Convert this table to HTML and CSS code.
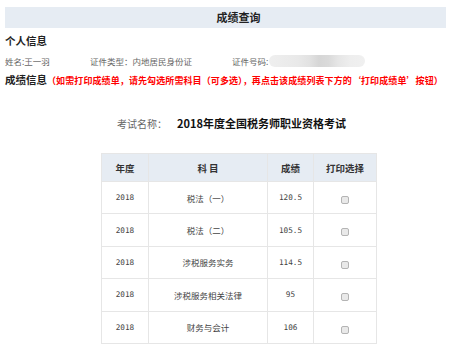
FILE: index.html
```html
<!DOCTYPE html>
<html lang="zh">
<head>
<meta charset="utf-8">
<title>成绩查询</title>
<link rel="stylesheet" href="styles.css">
</head>
<body>
<div class="page">
  <div class="titlebar"><span>成绩查询</span></div>
  <div class="heading">个人信息</div>
  <div class="info">
    <span>姓名:王一羽</span>
    <span>证件类型：内地居民身份证</span>
    <span class="idno">证件号码:<i class="mask"></i></span>
  </div>
  <div class="heading score-head">成绩信息<span class="notice">（如需打印成绩单，请先勾选所需科目（可多选），再点击该成绩列表下方的‘打印成绩单’按钮）</span></div>
  <div class="exam"><span class="exam-label">考试名称：</span><span class="exam-name">2018年度全国税务师职业资格考试</span></div>
  <table class="scores">
    <colgroup><col class="c1"><col class="c2"><col class="c3"><col class="c4"></colgroup>
    <thead>
      <tr><th>年度</th><th>科 目</th><th>成绩</th><th>打印选择</th></tr>
    </thead>
    <tbody>
      <tr><td class="num">2018</td><td>税法（一）</td><td class="num">120.5</td><td><input type="checkbox" class="chk"></td></tr>
      <tr><td class="num">2018</td><td>税法（二）</td><td class="num">105.5</td><td><input type="checkbox" class="chk"></td></tr>
      <tr><td class="num">2018</td><td>涉税服务实务</td><td class="num">114.5</td><td><input type="checkbox" class="chk"></td></tr>
      <tr><td class="num">2018</td><td>涉税服务相关法律</td><td class="num">95</td><td><input type="checkbox" class="chk"></td></tr>
      <tr><td class="num">2018</td><td>财务与会计</td><td class="num">106</td><td><input type="checkbox" class="chk"></td></tr>
    </tbody>
  </table>
</div>
</body>
</html>
```
FILE: styles.css
```css
html, body {
  margin: 0;
  padding: 0;
  background: #fff;
}
body {
  font-family: "Noto Sans CJK SC", "Noto Sans", sans-serif;
  color: #333;
}
.page {
  padding: 7px 4px 0 5px;
}
.titlebar {
  height: 21px;
  line-height: 21px;
  background: #e6ecf3;
  text-align: center;
  padding-left: 26px;
  font-size: 11px;
  font-weight: bold;
  color: #222;
}
.heading {
  margin-top: 6px;
  height: 14px;
  line-height: 14px;
  font-size: 10.5px;
  font-weight: bold;
  color: #222;
  white-space: nowrap;
}
.info {
  margin-top: 7px;
  display: grid;
  grid-template-columns: 85px 142px auto;
  height: 12px;
  line-height: 12px;
  font-size: 8.5px;
  color: #666;
}
.idno {
  display: flex;
  align-items: center;
}
.mask {
  display: inline-block;
  width: 96px;
  height: 12px;
  margin-left: 1px;
  border-radius: 6px;
  background: linear-gradient(to right, #efefef 0%, #e9e9e9 30%, #e2e2e2 42%, #d6d6d6 52%, #dadada 62%, #e6e6e6 72%, #eeeeee 85%, #f0f0f0 100%);
}
.score-head {
  margin-top: 6px;
}
.notice {
  color: #f00;
  font-size: 9px;
  font-weight: bold;
  letter-spacing: 0.1px;
}
.exam {
  margin-top: 28px;
  padding-left: 112px;
  height: 16px;
  line-height: 16px;
  display: flex;
  align-items: baseline;
  gap: 10px;
}
.exam-label {
  font-size: 10px;
  color: #666;
  width: 50px;
}
.exam-name {
  font-size: 11px;
  font-weight: bold;
  color: #111;
}
.scores {
  margin-top: 22px;
  margin-left: 96px;
  width: 275px;
  border-collapse: collapse;
  table-layout: fixed;
}
.c1 { width: 47px; }
.c2 { width: 119px; }
.c3 { width: 46px; }
.c4 { width: 63px; }
.scores th, .scores td {
  border: 1px solid #e6e6e6;
  text-align: center;
  padding: 0;
}
.scores th {
  height: 27px;
  background: #e6ecf3;
  font-size: 9.5px;
  font-weight: bold;
  color: #333;
}
.scores td {
  height: 31.4px;
  font-size: 8.5px;
  color: #444;
}
.scores td.num {
  font-family: "DejaVu Sans Mono", monospace;
  font-size: 7.7px;
  color: #444;
}
.chk {
  appearance: none;
  -webkit-appearance: none;
  width: 8px;
  height: 8px;
  margin: 2px 0 0 0;
  border: 1px solid #b4b4b4;
  border-radius: 2px;
  background: #e9e9e9;
  vertical-align: middle;
  box-sizing: border-box;
}
```
